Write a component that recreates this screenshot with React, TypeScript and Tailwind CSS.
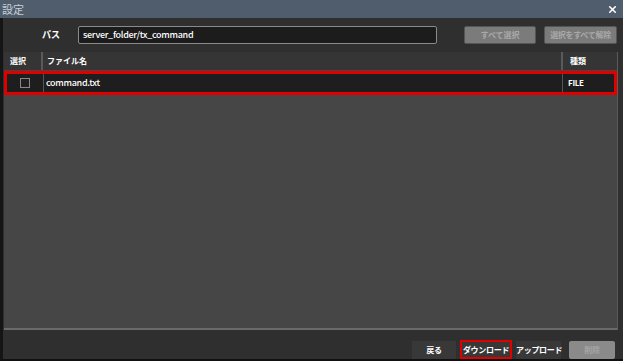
import { X } from 'lucide-react'

// ── Settings dialog: file transfer ────────────────────────────────────────────

const FONT = { fontFamily: '"Noto Sans CJK JP", "Noto Sans", sans-serif' }

const files = [{ name: 'command.txt', kind: 'FILE' }]

export default function App() {
  return (
    <div className="w-[623px] h-[361px] flex flex-col bg-[#2f2f2f] text-white overflow-hidden" style={FONT}>
      {/* Title bar */}
      <div className="h-[18px] flex items-center justify-between bg-[#4f5d6c] pl-[2px] pr-[5px]">
        <span className="text-[11px] leading-none text-[#c9d0d8]">設定</span>
        <X size={11} strokeWidth={3.5} className="text-white" />
      </div>

      <div className="flex-1 flex flex-col border-l-[3px] border-l-[#151515] border-b-[2px] border-b-[#111]">
        {/* Path row */}
        <div className="h-[34px] flex items-center pl-[39px] pr-[6px]">
          <span className="w-[36px] text-[9px] font-bold">パス</span>
          <div className="w-[359px] h-[18px] flex items-center px-[4px] bg-[#1c1c1c] border border-[#8a8a8a] rounded-[2px] text-[9px] font-medium tracking-[-0.3px]">
            server_folder/tx_command
          </div>
          <div className="flex-1" />
          <button className="w-[72px] h-[18px] mr-[8px] rounded-[2px] bg-[#7b7b7b] border border-[#555] text-[8px] font-bold text-[#a9a9a9] whitespace-nowrap">
            すべて選択
          </button>
          <button className="w-[73px] h-[18px] rounded-[2px] bg-[#7b7b7b] border border-[#555] text-[8px] font-bold text-[#a9a9a9] whitespace-nowrap tracking-[-0.3px]">
            選択をすべて解除
          </button>
        </div>

        {/* File table */}
        <div className="flex-1 mx-[1px] mr-[5px] flex flex-col bg-[#464646] border-b-[2px] border-b-[#6a6a6a] border-r border-r-[#5a5a5a]">
          <div className="h-[18px] flex bg-[#353535] text-[8px] font-bold">
            <div className="w-[39px] pl-[6px] flex items-center border-r-[2px] border-r-[#5a5a5a]">選択</div>
            <div className="flex-1 pl-[4px] flex items-center border-r-[2px] border-r-[#5a5a5a]">ファイル名</div>
            <div className="w-[54px] pl-[7px] flex items-center">種類</div>
          </div>
          {files.map((f) => (
            <div key={f.name} className="h-[24px] mt-[1px] flex border-[3px] border-[#e00000] bg-[#1e1e1e] text-[9px] font-medium tracking-[-0.3px]">
              <div className="w-[37px] flex items-center justify-center border-r border-r-[#555]">
                <span className="w-[10px] h-[10px] border border-[#888]" />
              </div>
              <div className="flex-1 pl-[2px] flex items-center border-r border-r-[#555]">{f.name}</div>
              <div className="w-[51px] pl-[5px] flex items-center text-[8px] font-bold">{f.kind}</div>
            </div>
          ))}
        </div>

        {/* Footer buttons */}
        <div className="h-[29px] flex items-end justify-end pr-[8px] gap-[4px] text-[8px] font-bold whitespace-nowrap tracking-[-0.3px]">
          <button className="w-[44px] h-[18px] bg-[#383838]">戻る</button>
          <button className="w-[52px] h-[19px] border-2 border-[#e00000] bg-[#383838]">ダウンロード</button>
          <button className="w-[45px] h-[18px] bg-[#383838]">アップロード</button>
          <button className="w-[46px] h-[18px] ml-[4px] bg-[#8a8a8a] text-[#a5a5a5] rounded-[2px]">削除</button>
        </div>
      </div>
    </div>
  )
}
